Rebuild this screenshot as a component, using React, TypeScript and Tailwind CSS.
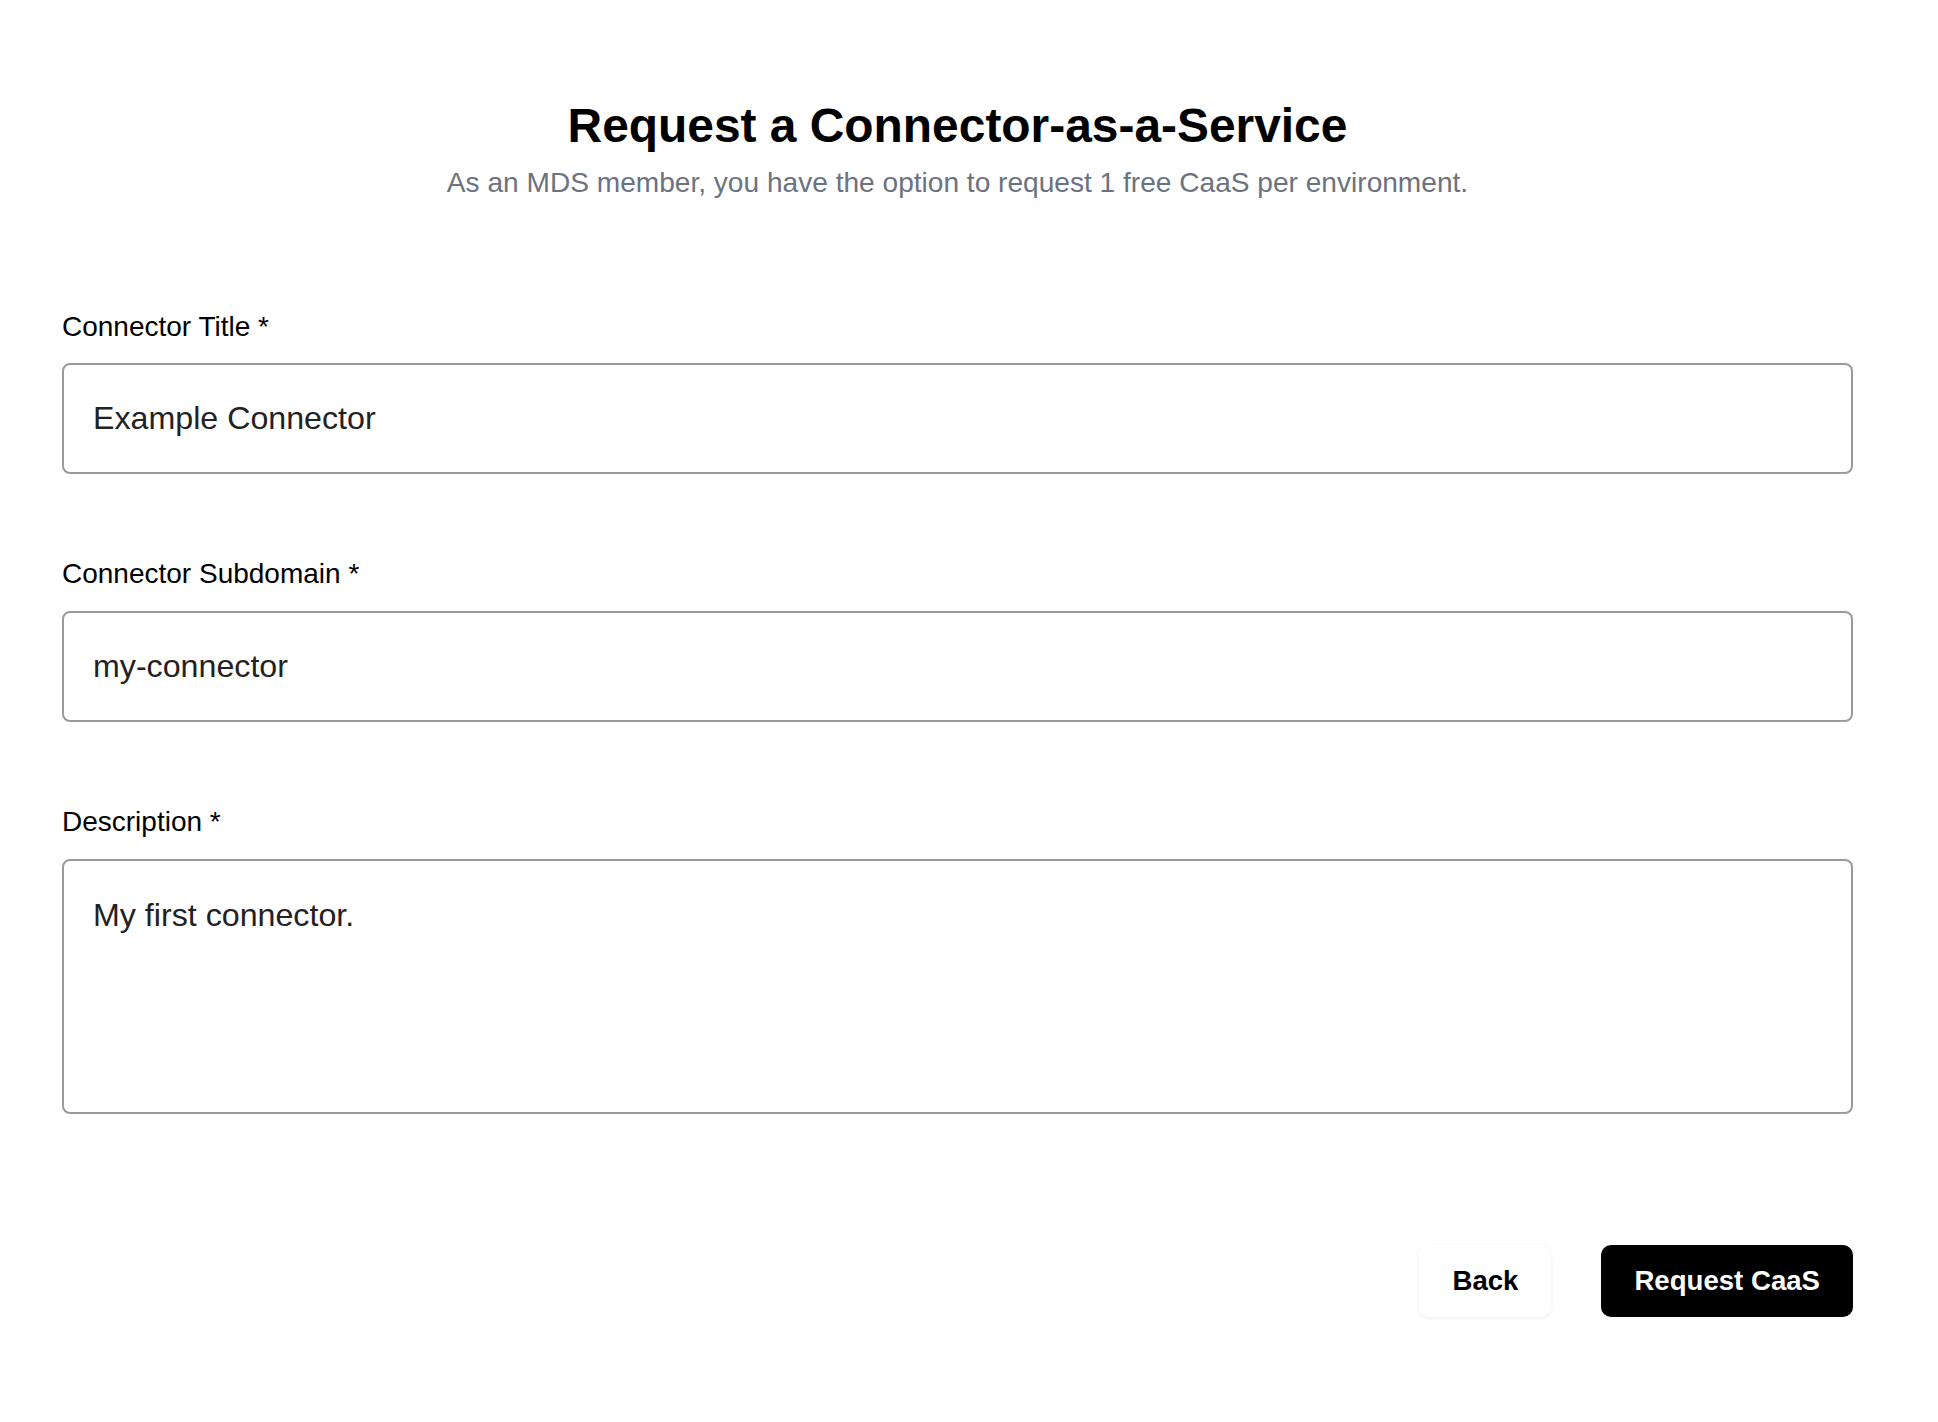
import React from "react";

export default function App() {
  const font = { fontFamily: '"Liberation Sans", Arial, Helvetica, sans-serif' };
  return (
    <div className="min-h-[1422px] w-full bg-white" style={font}>
      <div className="ml-[62px] w-[1791px] pt-[98px]">
        <div className="flex flex-col items-center">
          <h1 className="text-[47.9px] leading-[55px] font-bold text-black">
            Request a Connector-as-a-Service
          </h1>
          <p className="mt-[14px] text-[28.1px] leading-[32px] text-[#6b7280]">
            As an MDS member, you have the option to request 1 free CaaS per environment.
          </p>
        </div>

        <form className="mt-[112px] flex flex-col" onSubmit={(e) => e.preventDefault()}>
          <label className="text-[28px] leading-[32px] text-black">Connector Title *</label>
          <input
            defaultValue="Example Connector"
            className="mt-[20px] h-[111px] w-full rounded-[8px] border-2 border-[#9a9a9a] px-[29px] text-[32.2px] text-[#222222] outline-none"
            style={font}
          />

          <label className="mt-[84px] text-[28px] leading-[32px] text-black">Connector Subdomain *</label>
          <input
            defaultValue="my-connector"
            className="mt-[21px] h-[111px] w-full rounded-[8px] border-2 border-[#9a9a9a] px-[29px] text-[32.2px] text-[#222222] outline-none"
            style={font}
          />

          <label className="mt-[84px] text-[28px] leading-[32px] text-black">Description *</label>
          <textarea
            defaultValue="My first connector."
            className="mt-[21px] h-[255px] w-full resize-none rounded-[8px] border-2 border-[#9a9a9a] px-[29px] py-[36px] text-[32.2px] leading-[36.4px] text-[#222222] outline-none"
            style={font}
          />

          <div className="mt-[131px] flex justify-end gap-[50px]">
            <button
              type="button"
              className="h-[72px] rounded-[10px] bg-white px-[33px] text-[27.6px] font-bold text-black shadow-[0_1px_4px_rgba(0,0,0,0.08)]"
              style={font}
            >
              Back
            </button>
            <button
              type="submit"
              className="h-[72px] rounded-[10px] bg-black px-[33px] text-[27.6px] font-bold text-white"
              style={font}
            >
              Request CaaS
            </button>
          </div>
        </form>
      </div>
    </div>
  );
}
